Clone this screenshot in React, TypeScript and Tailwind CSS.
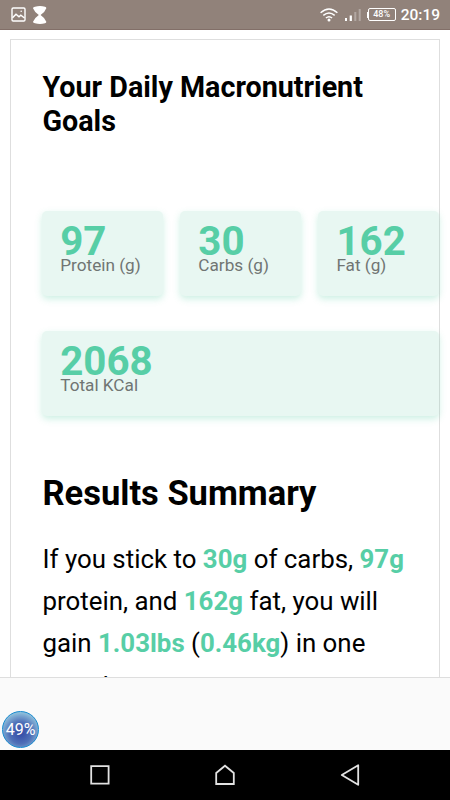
import type { ReactNode } from "react";

const macros = [
  { value: "97", label: "Protein (g)" },
  { value: "30", label: "Carbs (g)" },
  { value: "162", label: "Fat (g)" },
];

function StatCard({ value, label }: { value: string; label: string }) {
  return (
    <div className="h-[85px] rounded-[5px] bg-[#e8f7f2] pl-[18px] pt-[11px] shadow-[0_3px_7px_rgba(88,205,165,0.3)]">
      <div className="h-[34px] text-[40.3px] leading-[39px] font-bold text-[#57cea6]">
        {value}
      </div>
      <div className="-mt-px text-[17.2px] leading-[20px] text-[#707573]">{label}</div>
    </div>
  );
}

function Highlight({ children }: { children: ReactNode }) {
  return <strong className="font-bold text-[#57cea6]">{children}</strong>;
}

function StatusBar() {
  return (
    <header className="flex h-[30px] shrink-0 items-center justify-between border-b border-[#826f68] bg-[#91827a] text-white">
      <div className="flex items-center gap-[7px] pl-[11px]">
        <svg width="15" height="15" viewBox="0 0 15 15" fill="none" stroke="currentColor">
          <rect x="1" y="1" width="13" height="13" rx="1.2" strokeWidth="1.4" />
          <path d="M1.5 10.8 5 7.2 8 9.8 9.8 8.2 13.5 11" strokeWidth="1.5" />
          <circle cx="10.2" cy="4.3" r="0.8" fill="currentColor" stroke="none" />
        </svg>
        <svg width="14" height="18" viewBox="0 0 14 18" fill="currentColor">
          <path d="M0 2.2Q0 1 2 .7Q7-.5 12 .7Q13.5 1 13.3 2.2Q12 6 7.6 9Q12 12 13.3 15.8Q13.5 17 12 17.3Q7 18.5 2 17.3Q0 17 0 15.8Q1.5 12 5.8 9Q1.5 6 0 2.2Z" />
        </svg>
      </div>
      <div className="flex items-center pr-[10px]">
        <svg width="18" height="14" viewBox="0 0 18 14" fill="none" stroke="currentColor" strokeWidth="1.4">
          <path d="M.6 4.7Q9-2.8 17.4 4.7M3.3 7.4Q9 2.4 14.7 7.4M5.9 10Q9 7.3 12.1 10" />
          <circle cx="9" cy="12" r="1.5" fill="currentColor" stroke="none" />
        </svg>
        <svg className="ml-[7px]" width="16" height="13" viewBox="0 0 16 13" fill="currentColor">
          <path d="M0 10h2v3H0zM4.7 7.5h2.2V13H4.7z" />
          <path d="M9.3 4h2v9h-2zM13.7 1h2v12h-2z" opacity="0.3" />
        </svg>
        <div className="ml-[6px] h-[6px] w-px bg-white" />
        <div className="flex h-[13px] w-[28px] items-center justify-center rounded-[2px] border border-white text-[9px] leading-none font-medium">
          48%
        </div>
        <span className="ml-[5px] pt-[2px] text-[15.5px] leading-none font-medium">20:19</span>
      </div>
    </header>
  );
}

function NavBar() {
  return (
    <nav className="flex h-[50px] shrink-0 items-center justify-between bg-black px-[90px]">
      <svg width="20" height="20" viewBox="0 0 20 20" fill="none" stroke="#e2e2e2" strokeWidth="1.8">
        <path d="M1.2 1.2h17.4v17.4H1.2z" />
      </svg>
      <svg width="20" height="22" viewBox="0 0 20 22" fill="none" stroke="#e2e2e2" strokeWidth="1.8">
        <path d="M1.2 9 10 1.7 18.8 9v11H1.2z" />
      </svg>
      <svg width="20" height="22" viewBox="0 0 20 22" fill="none" stroke="#e2e2e2" strokeWidth="1.8" strokeLinejoin="round">
        <path d="M18.2 1.2v19.6L1.8 11z" />
      </svg>
    </nav>
  );
}

export default function App() {
  return (
    <div className="flex h-[800px] w-[450px] flex-col overflow-hidden bg-white font-[Roboto,sans-serif] text-black">
      <StatusBar />

      <main className="h-[647px] shrink-0 overflow-hidden px-[10px] pt-[9px]">
        <div className="h-[700px] border border-[#dedede] pl-[31.5px]">
          <h2 className="pt-[31px] text-[28.7px] leading-[33.5px] font-bold">
            Your Daily Macronutrient Goals
          </h2>

          <section className="-ml-[0.3px] mt-[73px] grid grid-cols-3 gap-x-[17.5px] gap-y-[35px]">
            {macros.map((macro) => (
              <StatCard key={macro.label} {...macro} />
            ))}
            <div className="col-span-3">
              <StatCard value="2068" label="Total KCal" />
            </div>
          </section>

          <h1 className="mt-[56px] text-[34.5px] leading-[42px] font-bold">Results Summary</h1>
          <p className="mt-[23.6px] text-[25.85px] leading-[42.4px]">
            If you stick to <Highlight>30g</Highlight> of carbs, <Highlight>97g</Highlight>
            <br />
            protein, and <Highlight>162g</Highlight> fat, you will
            <br />
            gain <Highlight>1.03lbs</Highlight> (<Highlight>0.46kg</Highlight>) in one
            <br />
            month.
          </p>
        </div>
      </main>

      <div className="flex h-[73px] shrink-0 items-end border-t border-[#dedede] bg-[#fafafa] pb-[2px] pl-[2px]">
        <div className="flex size-[37px] items-center justify-center rounded-full border-[1.5px] border-[#1689cf] bg-[radial-gradient(circle_at_50%_60%,#3148a5_0%,#4f70b8_40%,#8fc0dc_75%)] text-[16px] text-white">
          49%
        </div>
      </div>
      <NavBar />
    </div>
  );
}
